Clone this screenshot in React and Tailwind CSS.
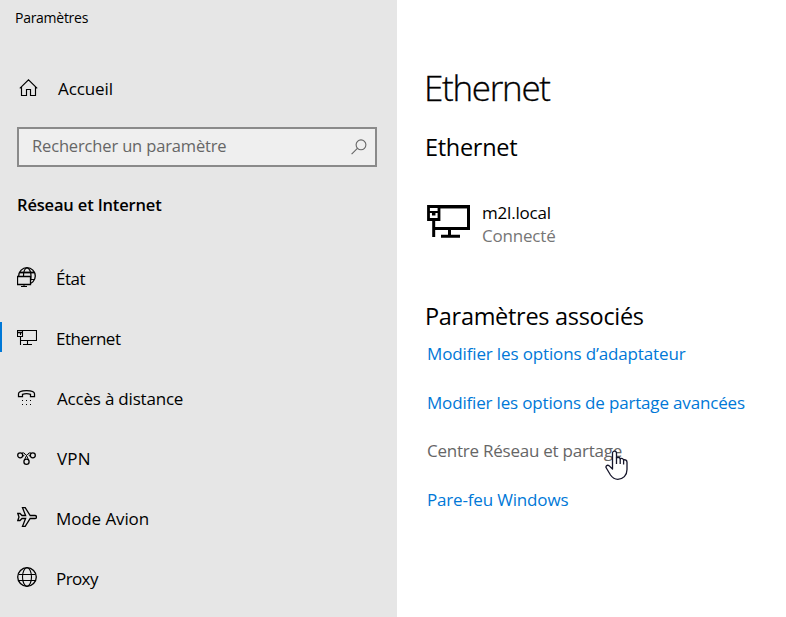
import React from 'react';

const line = { fill: 'none', stroke: '#000', strokeWidth: 1 };

function HomeIcon() {
  return (
    <svg className="block" width="20" height="18" viewBox="0 0 20 18" {...line}>
      <path d="M.8 9.300 9.500.800 18.200 9.300M2.500 8v8.500h5v-6h4v6h5V8" strokeWidth="1.150" />
    </svg>
  );
}

function SearchIcon() {
  return (
    <svg className="block" width="16" height="16" viewBox="0 0 16 16" fill="none" stroke="#666" strokeWidth="1.100">
      <circle cx="10" cy="5.800" r="4.900" />
      <path d="M6.400 9.400.600 15.200" />
    </svg>
  );
}

function StatusIcon() {
  return (
    <svg className="block" width="20" height="20" viewBox="0 0 20 20" {...line}>
      <circle cx="10" cy="9" r="8.300" strokeWidth="1.300" />
      <path d="M2.500 5.500h15" strokeWidth="1.800" />
      <path d="M6.500 9c0-5 1.500-8 3.500-8s4 3 4 8-.500 6-2 8M14 12.500h3.500" strokeWidth="1.200" />
      <path d="M.5 9.500h13v8H.5z" fill="#e6e6e6" strokeWidth="1.300" />
      <path d="M7 17.500v2M4 19.500h6" />
    </svg>
  );
}

function EthernetIcon() {
  return (
    <svg className="block" width="20" height="20" viewBox="0 0 20 20" {...line}>
      <path d="M5.500 3.500h14v10h-16M10.500 13.500v4M6 17.500h9M3.500 9.500V18M.500 3.500h5v6h-5zM3.500 5v3" strokeWidth="1.100" />
      <path d="M.5 5.500h5" strokeWidth="1.500" />
    </svg>
  );
}

function PhoneIcon() {
  return (
    <svg className="block" width="20" height="20" viewBox="0 0 20 20" {...line}>
      <path d="M1.500 9.500V6.800C1.500 4.700 5 3.500 9.500 3.500s8 1.200 8 3.300v2.700h-4V7.300c-2-.7-6-.7-8 0v2.200z" strokeWidth="1.250" />
      <path d="M5 13.500h1m3 0h1m3 0h1M5 17.500h1m3 0h1m3 0h1" />
    </svg>
  );
}

function VpnIcon() {
  return (
    <svg className="block" width="20" height="20" viewBox="0 0 20 20" {...line}>
      <circle cx="3.200" cy="8.300" r="2.500" strokeWidth="1.300" />
      <circle cx="15.800" cy="8.300" r="2.500" strokeWidth="1.300" />
      <circle cx="9.500" cy="14.700" r="2.600" strokeWidth="1.300" />
      <path d="M4.700 6.300c1.500-1.200 2.800-.3 4.800 2.200 2-2.500 3.300-3.400 4.800-2.200M5.300 9.700 7.500 8M13.700 9.700 11.500 8M7.500 12.800l2-4.300 2 4.300" />
    </svg>
  );
}

function PlaneIcon() {
  return (
    <svg className="block" width="20" height="20" viewBox="0 0 20 20" {...line}>
      <path d="M.8 6.500h2.200l2 2h3.600L5.500.7h2.700l5 7.800h4.600c1 0 1.700.7 1.700 1.500s-.7 1.500-1.700 1.500h-4.600l-5 7.800H5.500l3.100-7.800H5l-2 2H.8L2 10z" strokeWidth="1.300" />
    </svg>
  );
}

function GlobeIcon() {
  return (
    <svg className="block" width="20" height="20" viewBox="0 0 20 20" {...line}>
      <circle cx="10" cy="10" r="9.300" strokeWidth="1.300" />
      <ellipse cx="10" cy="10" rx="4.500" ry="9.300" strokeWidth="1.100" />
      <path d="M1.500 7.500h17M1.500 13.500h17" strokeWidth="1.100" />
    </svg>
  );
}

function AdapterIcon() {
  return (
    <svg className="block" width="44" height="34" viewBox="0 0 44 34" fill="none" stroke="#000">
      <path d="M13 1.500h28.500v22H7M22.500 24v7M14 31.200h19" strokeWidth="3" />
      <path d="M13 3.500h27" stroke="#888" strokeWidth="1" />
      <path d="M6.700 15v17" strokeWidth="3" />
      <path d="M1.500 1.500h10.500v13H1.500z" strokeWidth="2.800" />
      <path d="M1 7h11" strokeWidth="2" />
      <path d="M6.700 6v4.500" strokeWidth="3.500" />
    </svg>
  );
}

function HandCursor() {
  return (
    <svg className="absolute left-[178px] top-[23px]" width="24" height="31" viewBox="0 0 24 31">
      <path
        d="M7.500 19V3.200C7.500.4 11.500.4 11.500 3.200V8c1.300-1 3.300-.6 3.700.8 1.500-.8 3-.2 3.400 1.100 1.700-.5 3.400.3 3.400 2.400v7.200c0 6-4 9.800-9.200 9.800-3.500 0-5.500-1.700-7.300-4.300L1.300 18c-1-1.700.8-3.400 2.700-2.400z"
        fill="#fff"
        stroke="#15152a"
        strokeWidth="1.300"
        strokeLinejoin="round"
      />
      <path d="M11.500 7.500V14M15.200 8.800V14M18.600 10v4.500" fill="none" stroke="#15152a" strokeWidth="1.300" />
    </svg>
  );
}

const items = [
  { label: 'État', Icon: StatusIcon, text: 'pl-[19px] tracking-[-0.450px]' },
  { label: 'Ethernet', Icon: EthernetIcon, text: 'pl-[19px] tracking-[-0.500px]', active: true },
  { label: 'Accès à distance', Icon: PhoneIcon, text: 'pl-[20px] tracking-[-0.200px]' },
  { label: 'VPN', Icon: VpnIcon, text: 'pl-[20px] tracking-[0.150px]' },
  { label: 'Mode Avion', Icon: PlaneIcon, text: 'pl-[19px] tracking-[-0.100px]' },
  { label: 'Proxy', Icon: GlobeIcon, text: 'pl-[19px] tracking-[-0.600px]' },
];

export default function App() {
  return (
    <div className="flex h-[617px] w-[786px] overflow-hidden whitespace-nowrap bg-white font-['Open_Sans',sans-serif] text-[17px] text-black">
      <aside className="flex w-[397px] shrink-0 flex-col bg-[#e6e6e6]">
        <header className="h-[37px] pl-[15px] text-[14px] leading-[36px] tracking-[-0.270px]">Paramètres</header>
        <a className="mt-[32px] flex h-[40px] items-center pl-[19px]">
          <span className="pb-[2px]"><HomeIcon /></span>
          <span className="pl-[19px] tracking-[-0.100px]">Accueil</span>
        </a>
        <div className="ml-[17px] mt-[18px] flex h-[40px] w-[360px] items-center justify-between border-2 border-[#8a8a8a] bg-[#efefef] pl-[13px] pr-[8px] text-[#666]">
          <span className="pb-[2px] text-[16.500px] tracking-[-0.150px]">Rechercher un paramètre</span>
          <SearchIcon />
        </div>
        <h3 className="mt-[23px] h-[30px] pl-[17px] text-[16.500px] font-semibold leading-[30px] tracking-[-0.160px]">Réseau et Internet</h3>
        <nav className="mt-[27px]">
          {items.map(({ label, Icon, text, active }) => (
            <a key={label} className="flex h-[60px] items-center">
              <span className={active ? 'h-[30px] w-[2px] bg-[#0078d7]' : 'h-[30px] w-[2px]'} />
              <span className="pl-[15px]"><Icon /></span>
              <span className="pt-[4px]"><span className={text}>{label}</span></span>
            </a>
          ))}
        </nav>
      </aside>
      <main className="flex flex-1 flex-col pl-[28px]">
        <h1 className="-ml-px mt-[62px] h-[50px] text-[35px] font-light leading-[51px] tracking-[-1.300px] [-webkit-text-stroke:0.300px_#000]">Ethernet</h1>
        <h2 className="mt-[20px] h-[30px] text-[23.500px] leading-[30px] tracking-[-0.300px]">Ethernet</h2>
        <section className="mt-[39px] flex h-[48px] pl-[2px]">
          <div className="pt-[4px]"><AdapterIcon /></div>
          <div className="pl-[11px] leading-[23px] tracking-[-0.200px]">
            <p>m2l.local</p>
            <p className="text-[#767676]">Connecté</p>
          </div>
        </section>
        <h2 className="mt-[52px] h-[30px] text-[23.500px] leading-[30px] tracking-[-0.300px]">Paramètres associés</h2>
        <div className="mt-[-1px] flex flex-col pl-[2px] leading-[48.700px] tracking-[-0.170px] text-[#0078d7]">
          <a className="tracking-[-0.140px]">Modifier les options d’adaptateur</a>
          <a>Modifier les options de partage avancées</a>
          <a className="relative tracking-[-0.240px] text-[#666]">Centre Réseau et partage<HandCursor /></a>
          <a>Pare-feu Windows</a>
        </div>
      </main>
    </div>
  );
}
